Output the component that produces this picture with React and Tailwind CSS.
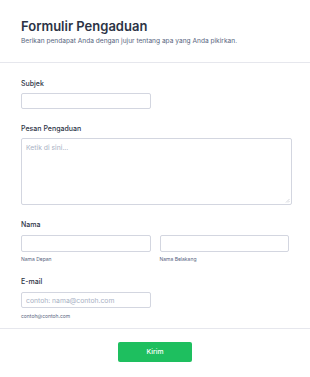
export default function App() {
  const font = { fontFamily: "Inter, 'Noto Sans', sans-serif" };
  return (
    <div className="w-[310px] h-[377px] bg-white overflow-hidden" style={font}>
      <div className="px-[21px] pt-[18px] pb-[16px] border-b border-[#e6e7ed]">
        <h1 className="text-[13px] leading-[16px] font-semibold text-[#2c3345]">Formulir Pengaduan</h1>
        <p className="mt-[3px] text-[6.6px] leading-[9px] text-[#57647e]">Berikan pendapat Anda dengan jujur tentang apa yang Anda pikirkan.</p>
      </div>
      <div className="px-[21px] pt-[16px]">
        <div>
          <label className="block text-[7px] leading-[9px] font-medium text-[#2c3345]">Subjek</label>
          <div className="mt-[5px] w-[130px] h-[16px] border border-[#d3d6e0] rounded-[2px]"></div>
        </div>
        <div className="mt-[15px]">
          <label className="block text-[7px] leading-[9px] font-medium text-[#2c3345]">Pesan Pengaduan</label>
          <div className="relative mt-[5px] w-[271px] h-[67px] border border-[#d3d6e0] rounded-[2px] px-[4px] pt-[4px]">
            <div className="text-[6.8px] leading-[9px] text-[#a9b1c4]">Ketik di sini...</div>
            <svg className="absolute right-[1px] bottom-[1px]" width="5" height="5" viewBox="0 0 5 5">
              <path d="M4.5 1 L1 4.5 M4.5 3 L3 4.5" stroke="#b8bcc8" strokeWidth="0.6" />
            </svg>
          </div>
        </div>
        <div className="mt-[15px]">
          <label className="block text-[7px] leading-[9px] font-medium text-[#2c3345]">Nama</label>
          <div className="mt-[6px] flex gap-[9px]">
            <div className="w-[131px]">
              <div className="h-[17px] border border-[#d3d6e0] rounded-[2px]"></div>
              <div className="mt-[4px] text-[5px] leading-[7px] text-[#57647e]">Nama Depan</div>
            </div>
            <div className="w-[131px]">
              <div className="h-[17px] border border-[#d3d6e0] rounded-[2px]"></div>
              <div className="mt-[4px] text-[5px] leading-[7px] text-[#57647e]">Nama Belakang</div>
            </div>
          </div>
        </div>
        <div className="mt-[14px]">
          <label className="block text-[7px] leading-[9px] font-medium text-[#2c3345]">E-mail</label>
          <div className="mt-[6px] w-[130px] h-[16px] border border-[#d3d6e0] rounded-[2px] px-[4px] flex items-center">
            <span className="text-[6.8px] leading-[9px] text-[#a9b1c4]">contoh: nama@contoh.com</span>
          </div>
          <div className="mt-[5px] text-[5px] leading-[7px] text-[#57647e]">contoh@contoh.com</div>
        </div>
      </div>
      <div className="mt-[8px] border-t border-[#e6e7ed] flex justify-center pt-[13px]">
        <button className="w-[74px] h-[20px] rounded-[2px] bg-[#1ebf5f] text-white text-[6.8px] font-medium">Kirim</button>
      </div>
    </div>
  );
}
